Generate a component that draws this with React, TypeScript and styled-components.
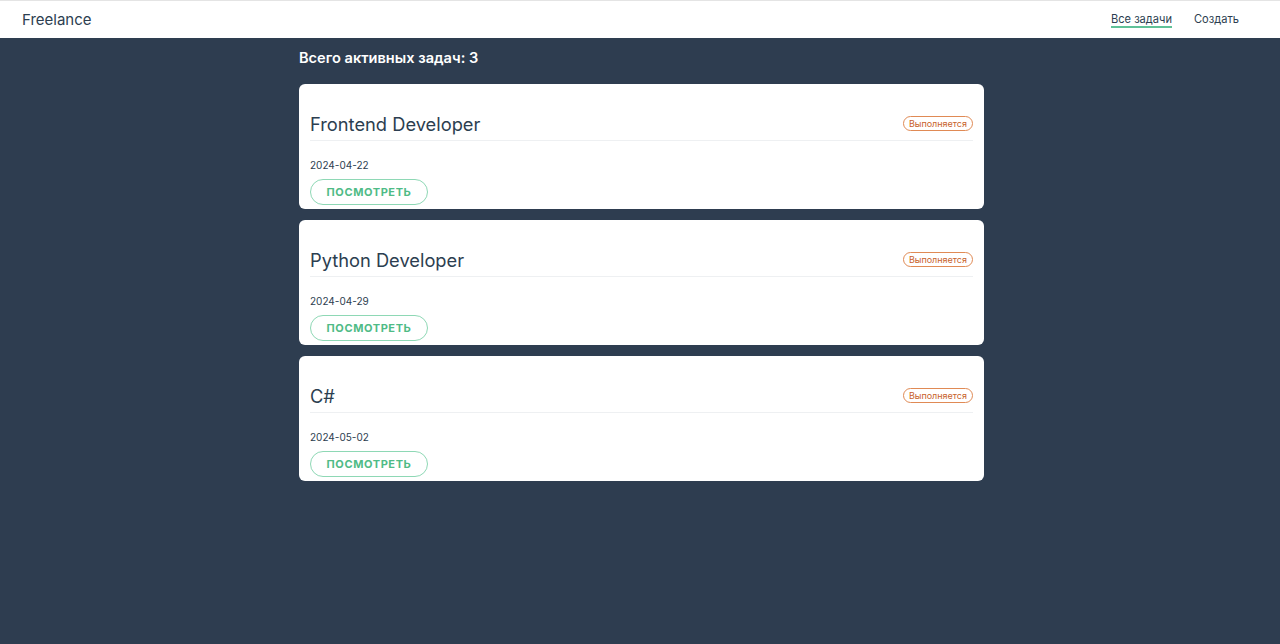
import React from "react";
import styled, { createGlobalStyle } from "styled-components";

const Global = createGlobalStyle`
  html, body { margin: 0; padding: 0; background: #2e3d50; }
  body { font-family: Inter, "Noto Sans", sans-serif; color: #2c3e50; }
  * { box-sizing: border-box; }
`;

const Header = styled.header`
  height: 38px;
  background: #fff;
  border-top: 1px solid #e4e4e4;
  display: flex;
  align-items: center;
  justify-content: space-between;
  padding: 0 41px 0 22px;
`;

const Brand = styled.div`
  font-size: 15px;
  color: #2c3e50;
`;

const Nav = styled.nav`
  display: flex;
  gap: 22px;
  align-items: center;
`;

const NavLink = styled.a<{ $active?: boolean }>`
  font-size: 11.1px;
  color: #2c3e50;
  text-decoration: none;
  padding-bottom: 0;
  border-bottom: 2px solid ${(p) => (p.$active ? "#5fc197" : "transparent")};
  margin-top: 1px;
`;

const Main = styled.main`
  width: 685px;
  margin-left: calc(50% - 341px);
  padding-top: 11px;
`;

const Heading = styled.h2`
  margin: 0 0 16px;
  font-size: 14.6px;
  font-weight: 600;
  color: #fff;
  line-height: 19px;
`;

const List = styled.div`
  display: flex;
  flex-direction: column;
  gap: 11px;
`;

const Card = styled.div`
  background: #fff;
  border-radius: 6px;
  height: 125px;
  padding: 27px 11px 0 11px;
`;

const CardHead = styled.div`
  display: flex;
  align-items: flex-end;
  justify-content: space-between;
  border-bottom: 1px solid #eef0f2;
  padding-bottom: 3px;
`;

const Title = styled.div`
  font-size: 18.3px;
  color: #2c3e50;
  line-height: 26px;
`;

const Badge = styled.span`
  font-size: 9px;
  color: #c8622a;
  border: 1px solid #e08a55;
  border-radius: 8px;
  padding: 1px 5px;
  line-height: 11px;
  margin-bottom: 6px;
`;

const DateText = styled.div`
  font-size: 10px;
  color: #2c3e50;
  margin-top: 18px;
  line-height: 12px;
`;

const Button = styled.button`
  display: block;
  margin-top: 8px;
  width: 118px;
  height: 26px;
  border-radius: 13px;
  border: 1px solid #8ed8b5;
  background: #fff;
  color: #4fbb86;
  font-family: Inter, "Noto Sans", sans-serif;
  font-weight: 700;
  font-size: 11px;
  letter-spacing: 0.6px;
  cursor: pointer;
`;

const tasks = [
  { title: "Frontend Developer", date: "2024-04-22" },
  { title: "Python Developer", date: "2024-04-29" },
  { title: "C#", date: "2024-05-02" },
];

export default function App() {
  return (
    <>
      <Global />
      <Header>
        <Brand>Freelance</Brand>
        <Nav>
          <NavLink $active>Все задачи</NavLink>
          <NavLink>Создать</NavLink>
        </Nav>
      </Header>
      <Main>
        <Heading>Всего активных задач: 3</Heading>
        <List>
          {tasks.map((t) => (
            <Card key={t.title}>
              <CardHead>
                <Title>{t.title}</Title>
                <Badge>Выполняется</Badge>
              </CardHead>
              <DateText>{t.date}</DateText>
              <Button>ПОСМОТРЕТЬ</Button>
            </Card>
          ))}
        </List>
      </Main>
    </>
  );
}
